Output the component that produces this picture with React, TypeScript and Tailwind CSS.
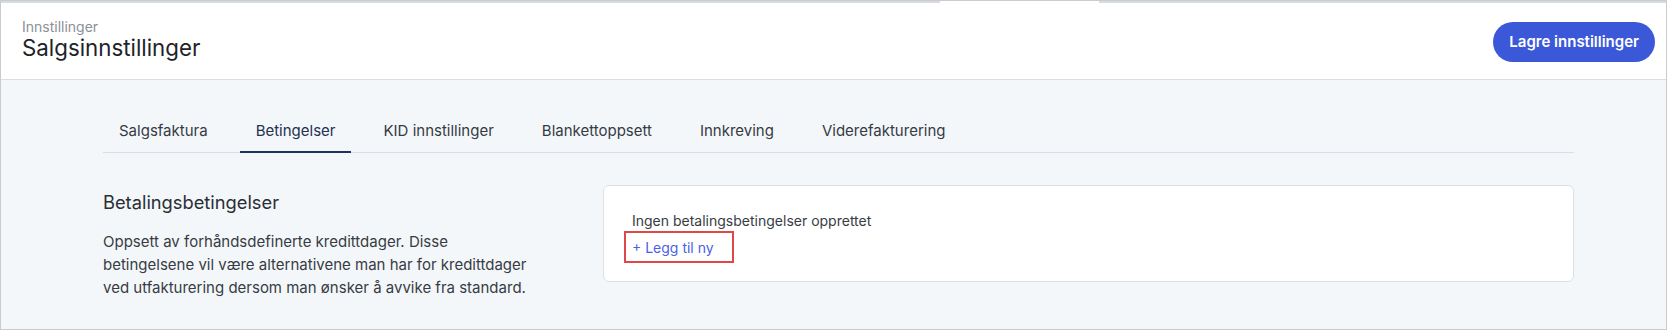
import React from "react";

const tabs = [
  "Salgsfaktura",
  "Betingelser",
  "KID innstillinger",
  "Blankettoppsett",
  "Innkreving",
  "Viderefakturering",
];

export default function App() {
  return (
    <div
      className="w-[1667px] h-[330px] border border-[#cbcbcb] bg-[#f4f7f9] flex flex-col overflow-hidden"
      style={{ fontFamily: "Inter, 'Noto Sans', sans-serif" }}
    >
      <div className="h-[79px] shrink-0 bg-white border-b border-[#d8dee6] flex flex-col">
        <div className="h-[2px] flex shrink-0">
          <div className="w-[939px] bg-[#d6dce4]" />
          <div className="w-[159px] bg-white" />
          <div className="flex-1 bg-[#d6dce4]" />
        </div>
        <div className="flex-1 flex items-center justify-between pl-[21px] pr-[11px]">
          <div className="flex flex-col mb-[3px]">
            <span className="text-[14px] leading-[16px] text-[#8b9098]">Innstillinger</span>
            <span className="text-[22.3px] leading-[26px] text-[#1f2329]">Salgsinnstillinger</span>
          </div>
          <button className="h-[40px] px-[16px] mt-[2px] rounded-full bg-[#3b58d9] text-white text-[15px] font-semibold">
            Lagre innstillinger
          </button>
        </div>
      </div>

      <div className="flex-1 pl-[102px] pr-[92px] pt-[41px]">
        <div className="flex gap-4 border-b border-[#d8dee6]">
          {tabs.map((t) => {
            const active = t === "Betingelser";
            return (
              <div
                key={t}
                className={
                  active
                    ? "px-4 pb-[10px] -mb-px border-b-2 border-[#1f3363] text-[15px] leading-[20px] text-[#243150]"
                    : "px-4 pb-[10px] -mb-px border-b-2 border-transparent text-[15px] leading-[20px] text-[#353b45]"
                }
              >
                {t}
              </div>
            );
          })}
        </div>

        <div className="mt-[32px] flex">
          <div className="w-[500px] shrink-0 pt-[5px]">
            <h2 className="text-[18.3px] leading-[24px] text-[#2a2e35]">Betalingsbetingelser</h2>
            <p className="mt-[16px] w-[440px] text-[15px] leading-[23px] text-[#373c44]">
              Oppsett av forhåndsdefinerte kredittdager. Disse betingelsene vil være alternativene man har for
              kredittdager ved utfakturering dersom man ønsker å avvike fra standard.
            </p>
          </div>
          <div className="flex-1 h-[97px] bg-white border border-[#dce1e8] rounded-[6px] px-[20px] pt-[25px]">
            <div className="ml-[8px] text-[14px] leading-[20px] text-[#373c44]">
              Ingen betalingsbetingelser opprettet
            </div>
            <div className="w-[110px] h-[32px] border-2 border-[#e04848] pl-[6px] pt-[2px]">
              <span className="text-[14px] leading-[20px] text-[#4a62e3]">+ Legg til ny</span>
            </div>
          </div>
        </div>
      </div>
    </div>
  );
}
